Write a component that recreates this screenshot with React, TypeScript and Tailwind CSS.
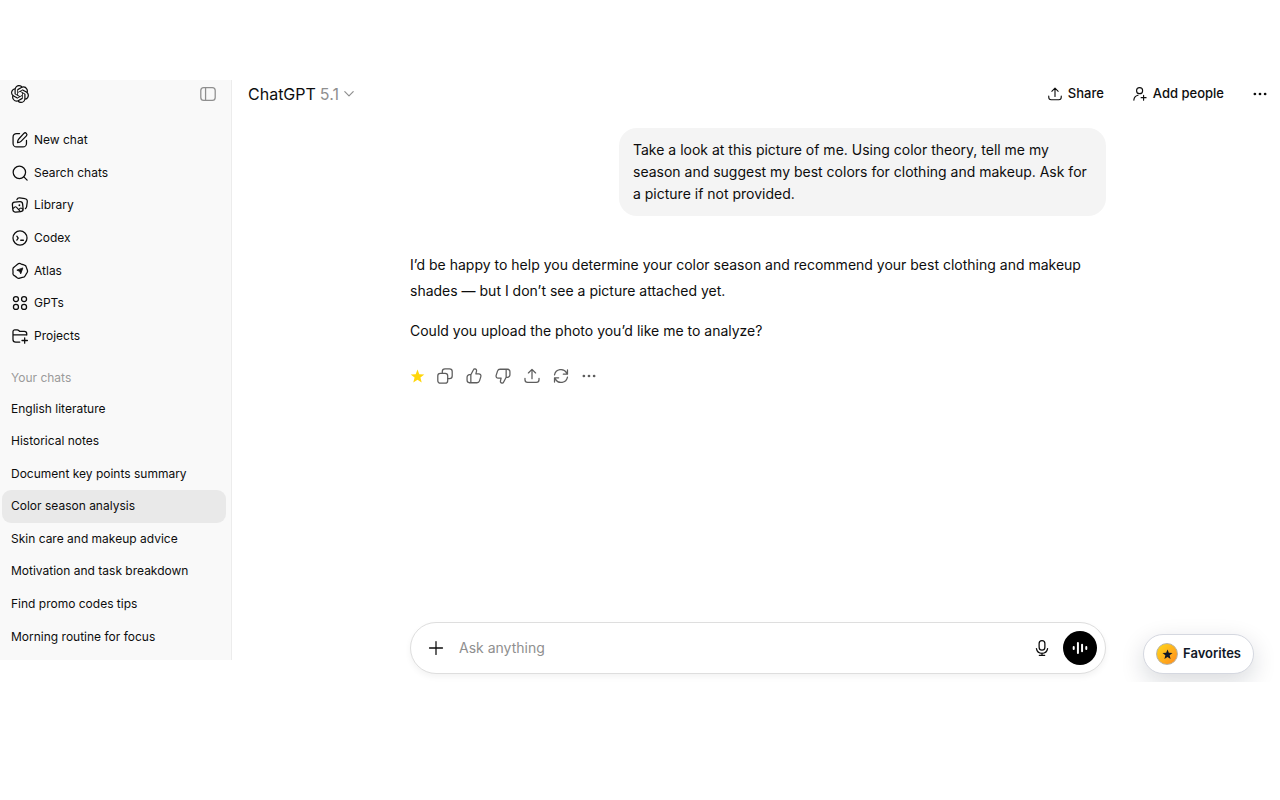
import { useState, type ReactNode } from 'react';
import { SiOpenai } from 'react-icons/si';

type IconProps = {
  children: ReactNode;
  className?: string;
};

type NavItem = {
  label: string;
  icon: ReactNode;
};

const Icon = ({ children, className = 'size-[18px]' }: IconProps) => (
  <svg
    className={`shrink-0 ${className}`}
    viewBox="0 0 20 20"
    fill="none"
    stroke="currentColor"
    strokeWidth="1.4"
    strokeLinecap="round"
    strokeLinejoin="round"
    aria-hidden="true"
  >
    {children}
  </svg>
);

const ShareIcon = ({ className }: { className?: string }) => (
  <Icon className={className}>
    <path d="M10 13V2.8M6 6.6l4-4 4 4M2.2 12.6v1.6a3 3 0 0 0 3 3h9.6a3 3 0 0 0 3-3v-1.6" />
  </Icon>
);

const DotsIcon = ({ className }: { className?: string }) => (
  <Icon className={className}>
    <g fill="currentColor" stroke="none">
      <circle cx="3.6" cy="10" r="1.7" />
      <circle cx="10" cy="10" r="1.7" />
      <circle cx="16.4" cy="10" r="1.7" />
    </g>
  </Icon>
);

const StarIcon = ({ className }: { className: string }) => (
  <svg className={className} viewBox="0 0 20 20" fill="currentColor" aria-hidden="true">
    <path d="M10 .8l2.4 6.1 6.7.4-5.2 4.1 1.7 6.6-5.6-3.6L4.4 18l1.7-6.6L.9 7.3l6.7-.4z" />
  </svg>
);

const thumbPath =
  'M6.5 8.6 9.4 3c.3-.7 1-1 1.7-.9 1.3.2 2 1.3 1.7 2.5l-.7 3h3.2c1.7 0 2.8 1.5 2.3 3.1l-1.5 4.7c-.4 1.3-1.5 2.1-2.8 2.1H6.5M6.5 8.6v8.9M6.5 8.6H5a2.7 2.7 0 0 0-2.7 2.7v3.5A2.7 2.7 0 0 0 5 17.5h1.5';

const navItems: NavItem[] = [
  {
    label: 'New chat',
    icon: (
      <Icon>
        <path d="M9.5 2.8H6.2a3.9 3.9 0 0 0-3.9 3.9v7.1a3.9 3.9 0 0 0 3.9 3.9h7.1a3.9 3.9 0 0 0 3.9-3.9v-3.3" />
        <path d="M14.3 2.7a1.9 1.9 0 0 1 2.8 2.7l-6 6.1c-.9.9-2.1 1.3-3.8 1.4 0-1.7.4-3.1 1.3-4z" />
      </Icon>
    ),
  },
  {
    label: 'Search chats',
    icon: (
      <Icon>
        <circle cx="9.3" cy="9.3" r="6.9" />
        <path d="m14.3 14.3 3.600 3.600" />
      </Icon>
    ),
  },
  {
    label: 'Library',
    icon: (
      <Icon>
        <rect x="1.8" y="6.6" width="11.4" height="11" rx="2.8" transform="rotate(-6 7.5 12.1)" />
        <path d="m2.6 13.6 1.5-1.3c.6-.5 1.4-.5 1.9.1l4.2 4.6M8.8 14.9l1.3-1.2c.6-.5 1.3-.5 1.9 0l1 1" strokeWidth="1.2" />
        <circle cx="9.3" cy="10.3" r="1" fill="currentColor" stroke="none" />
        <path d="M6.600 4c.5-1.300 1.700-2 3.100-1.800l5.700.8c1.800.2 2.900 1.700 2.700 3.400l-.8 5.600c-.1.9-.6 1.600-1.300 2" />
      </Icon>
    ),
  },
  {
    label: 'Codex',
    icon: (
      <Icon>
        <circle cx="10" cy="10" r="7.8" />
        <path d="m6.5 8 1.5 2.2-1.5 2.2M10.8 12.5h3" />
      </Icon>
    ),
  },
  {
    label: 'Atlas',
    icon: (
      <Icon>
        <path d="M7.300 2.400c1.300-1 2.800-1 4.100-.1l3 .9c1.600.3 2.500 1.300 2.700 2.800l.9 2.700c.7 1.500.4 2.900-.8 4l-1.400 2.600c-.6 1.400-1.800 2-3.200 1.900l-2.900.7c-1.500.5-2.800.1-3.700-1.100l-2.400-1.700c-1.300-.8-1.700-2.100-1.300-3.500l-.2-2.900c-.2-1.500.4-2.700 1.700-3.300z" />
        <path d="m13 7-2.200 6.100-1.200-2.700-2.700-1.200z" fill="currentColor" strokeWidth="1" />
      </Icon>
    ),
  },
  {
    label: 'GPTs',
    icon: (
      <Icon>
        <circle cx="5.5" cy="5.6" r="2.8" />
        <circle cx="14.5" cy="5.6" r="2.8" />
        <circle cx="5.5" cy="14.4" r="2.8" />
        <circle cx="14.5" cy="14.4" r="2.8" />
      </Icon>
    ),
  },
  {
    label: 'Projects',
    icon: (
      <Icon>
        <path d="M9.8 16.8H5.2a3 3 0 0 1-3-3V5.2a2 2 0 0 1 2-2h2.7c.7 0 1.2.2 1.7.7l.9.9h5.3a2.7 2.7 0 0 1 2.7 2.7V9M2.2 8.7h14.9M15.2 12v6M12.2 15h6" />
      </Icon>
    ),
  },
];

const chats = [
  'English literature',
  'Historical notes',
  'Document key points summary',
  'Color season analysis',
  'Skin care and makeup advice',
  'Motivation and task breakdown',
  'Find promo codes tips',
  'Morning routine for focus',
];

const messageActions: NavItem[] = [
  { label: 'Add to favorites', icon: <StarIcon className="size-[15px] text-[#ffd60a]" /> },
  {
    label: 'Copy',
    icon: (
      <Icon>
        <rect x="2" y="7" width="11" height="11" rx="2.8" />
        <path d="M7 6.8V5a3 3 0 0 1 3-3h5a3 3 0 0 1 3 3v5a3 3 0 0 1-3 3h-1.8" />
      </Icon>
    ),
  },
  {
    label: 'Good response',
    icon: (
      <Icon>
        <path d={thumbPath} />
      </Icon>
    ),
  },
  {
    label: 'Bad response',
    icon: (
      <Icon className="size-[18px] rotate-180">
        <path d={thumbPath} />
      </Icon>
    ),
  },
  { label: 'Share response', icon: <ShareIcon /> },
  {
    label: 'Try again',
    icon: (
      <Icon>
        <path d="M2.8 8.8a7.3 7.3 0 0 1 13.5-2.3L17.2 8M17.2 3.2V8h-4.6M17.2 11.2a7.3 7.3 0 0 1-13.5 2.3L2.8 12M2.8 16.8V12h4.6" />
      </Icon>
    ),
  },
  { label: 'More actions', icon: <DotsIcon className="size-4" /> },
];

const Sidebar = () => {
  const [active, setActive] = useState('Color season analysis');

  return (
    <aside className="flex min-h-[580px] w-[232px] shrink-0 flex-col self-start border-r border-[#ececec] bg-[#f9f9f9] pb-[7px] text-xs leading-5">
      <div className="mb-[17px] flex h-[27px] items-center justify-between pr-[14px] pl-[11px]">
        <a href="#home" aria-label="ChatGPT home">
          <SiOpenai className="size-[18px]" />
        </a>
        <button type="button" aria-label="Close sidebar" className="text-[#8f8f8f]">
          <Icon>
            <rect x="2" y="3" width="16" height="14" rx="3.2" />
            <path d="M7.3 3v14" />
          </Icon>
        </button>
      </div>
      <nav className="flex flex-[7] flex-col">
        <ul className="grid flex-1 auto-rows-fr px-[2px]">
          {navItems.map((item) => (
            <li key={item.label} className="grid">
              <a href="#nav" className="mr-[3px] flex items-center gap-[5px] rounded-[9px] px-[9px] hover:bg-[#efefef]">
                {item.icon}
                {item.label}
              </a>
            </li>
          ))}
        </ul>
      </nav>
      <h2 className="mt-4 mb-1 px-[11px] text-[#9b9b9b]">Your chats</h2>
      <ul className="grid flex-[8] auto-rows-fr px-[2px]">
        {chats.map((chat) => (
          <li key={chat} className="grid">
            <a
              href="#chat"
              className={`mr-[3px] flex items-center rounded-[9px] px-[9px] ${chat === active ? 'bg-[#e9e9e9]' : 'hover:bg-[#efefef]'}`}
              onClick={() => setActive(chat)}
            >
              {chat}
            </a>
          </li>
        ))}
      </ul>
    </aside>
  );
};

const Composer = () => {
  const [prompt, setPrompt] = useState('');

  return (
    <form
      className="mt-auto flex h-[52px] items-center rounded-full border border-[#dedede] bg-white pr-2 pl-4 shadow-[0_3px_6px_rgba(0,0,0,0.05)]"
      onSubmit={(event) => event.preventDefault()}
    >
      <button type="button" aria-label="Add files">
        <Icon>
          <path d="M10 2.8v14.4M2.8 10h14.4" />
        </Icon>
      </button>
      <input
        aria-label="Ask anything"
        className="ml-[14px] min-w-0 flex-1 bg-transparent text-sm outline-none placeholder:text-[#8f8f8f]"
        placeholder="Ask anything"
        value={prompt}
        onChange={(event) => setPrompt(event.target.value)}
      />
      <button type="button" aria-label="Dictate" className="mr-3">
        <Icon>
          <rect x="6.8" y="1.8" width="6.4" height="10.6" rx="3.2" />
          <path d="M3.8 10.7a6.3 6.3 0 0 0 12.4 0M10 15.8v2.2M7 18.1h6" />
        </Icon>
      </button>
      <button type="button" aria-label="Use voice mode" className="flex size-[34px] items-center justify-center rounded-full bg-black text-white">
        <Icon>
          <path d="M3 8.8v2.4M7.700 4.500v11M12.300 6.500v7M17 8.800v2.400" strokeWidth="2.200" />
        </Icon>
      </button>
    </form>
  );
};

const App = () => (
  <div className="flex min-h-screen items-start bg-white pt-20 font-['Inter','Liberation_Sans',sans-serif] text-[#0d0d0d]">
    <Sidebar />
    <main className="relative flex min-h-[602px] min-w-0 flex-1 flex-col overflow-hidden">
      <header className="flex h-[27px] shrink-0 items-center pr-3 pl-4">
        <button type="button" className="flex items-center gap-1 text-base">
          <span>ChatGPT</span>
          <span className="text-[#8f8f8f]">5.1</span>
          <Icon className="size-3 text-[#8f8f8f]">
            <path d="m3 6 7 7 7-7" strokeWidth="2" />
          </Icon>
        </button>
        <div className="ml-auto flex items-center text-[13px] font-medium">
          <button type="button" className="mr-7 flex items-center gap-[5px]">
            <ShareIcon className="size-4" />
            Share
          </button>
          <button type="button" className="mr-7 flex items-center gap-[5px]">
            <Icon className="size-4">
              <circle cx="9.5" cy="5.8" r="3.8" />
              <path d="M2.3 17.7c.3-3.3 2.2-5.5 5.2-6.1M14.5 11.500v6.200M11.400 14.600h6.200" />
            </Icon>
            Add people
          </button>
          <button type="button" aria-label="More options">
            <DotsIcon className="size-4" />
          </button>
        </div>
      </header>

      <div className="flex flex-1 flex-col pr-4 pb-2 pl-5">
        <div className="mx-auto flex w-full max-w-[696px] flex-1 flex-col">
          <p className="mt-[21px] ml-auto max-w-[487px] rounded-[18px] bg-[#f4f4f4] px-[14px] py-[11px] text-sm leading-[22px]">
            Take a look at this picture of me. Using color theory, tell me my season and suggest my best colors for clothing and makeup. Ask for a picture if not provided.
          </p>
          <div className="mt-9 space-y-[14px] text-sm leading-[26px]">
            <p>
              I’d be happy to help you determine your color season and recommend your best clothing and makeup shades — but I don’t see a picture attached yet.
            </p>
            <p>Could you upload the photo you’d like me to analyze?</p>
          </div>
          <div className="mt-[23px] flex items-center gap-[11px] text-[#5d5d5d]">
            {messageActions.map((action) => (
              <button key={action.label} type="button" aria-label={action.label}>
                {action.icon}
              </button>
            ))}
          </div>
          <Composer />
        </div>
      </div>

      <button
        type="button"
        className="absolute right-[26px] bottom-2 flex h-10 items-center gap-[5px] rounded-full border border-[#d5d8e0] bg-white px-3 text-[13px] font-semibold text-[#111827] shadow-[0_8px_24px_rgba(15,23,42,0.16)]"
      >
        <span className="flex size-[22px] items-center justify-center rounded-full border border-[#b9b4a5] bg-linear-to-br from-[#ffd91a] to-[#ff8a1c]">
          <StarIcon className="size-[11px]" />
        </span>
        Favorites
      </button>
    </main>
  </div>
);

export default App;
